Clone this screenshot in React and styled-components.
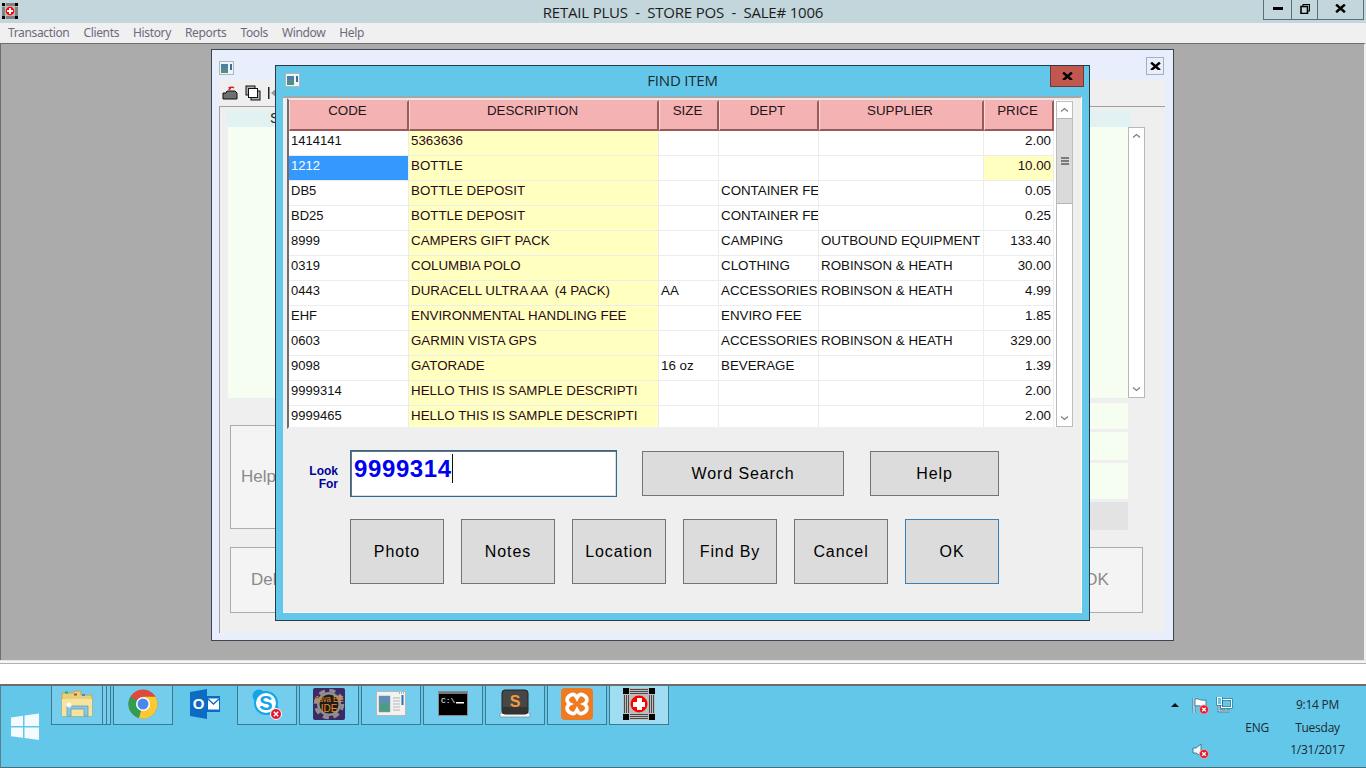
import React from "react";
import styled, { createGlobalStyle } from "styled-components";

const Global = createGlobalStyle`
  html, body { margin: 0; padding: 0; overflow: hidden; }
  body { font-family: "Liberation Sans", Arial, sans-serif; }
  * { box-sizing: border-box; }
`;

const Screen = styled.div`
  width: 1366px;
  height: 768px;
  display: flex;
  flex-direction: column;
  overflow: hidden;
  background: #f0f0f0;
`;

const TitleBar = styled.div`
  height: 23px;
  background: #c3d6dc;
  display: flex;
  align-items: flex-start;
  position: relative;
  padding-left: 2px;
  padding-top: 3px;
`;
const TitleText = styled.div`
  position: absolute;
  left: 0;
  right: 0;
  top: 2px;
  text-align: center;
  font: 15px/20px "Open Sans", sans-serif;
  letter-spacing: -0.2px;
  white-space: pre;
  color: #1c1c1c;
`;
const Controls = styled.div`
  position: absolute;
  top: 0;
  left: 1263px;
  display: flex;
  height: 20px;
  border: 1px solid #55707c;
  border-top: 0;
`;
const Control = styled.div`
  width: ${(p) => p.$w}px;
  display: flex;
  align-items: center;
  justify-content: center;
  padding-bottom: 2px;
  border-left: ${(p) => (p.$first ? "0" : "1px solid #55707c")};
`;

const MenuBar = styled.div`
  height: 20px;
  background: #f0f0f0;
  display: flex;
  gap: 14px;
  padding-left: 8px;
  font: 12px/20px "Noto Sans", sans-serif;
  letter-spacing: -0.35px;
  color: #6b6b7b;
`;

const Mdi = styled.div`
  height: 617px;
  position: relative;
  background: #ababab;
  border: 1px solid #6e6e6e;
  border-width: 1px 0 0 1px;
  border-right: 2px solid #f0f0f0;
`;

const BackWindow = styled.div`
  position: absolute;
  left: 210px;
  top: 5px;
  width: 963px;
  height: 592px;
  background: #e8eefc;
  border: 1px solid #3b4650;
  padding: 0 8px 7px 7px;
  display: flex;
  flex-direction: column;
  color: #8a8a8a;
`;
const BackHead = styled.div`
  height: 30px;
  display: flex;
  align-items: center;
  justify-content: space-between;
  padding-top: 6px;
  padding-right: 1px;
`;
const BackClose = styled.div`
  width: 18px;
  height: 18px;
  border: 1px solid #a3b0bd;
  display: flex;
  align-items: center;
  justify-content: center;
  margin-top: -4px;
`;
const BackTools = styled.div`
  height: 27px;
  background: #efefef;
  display: flex;
  align-items: center;
  gap: 7px;
  padding-left: 3px;
  border-bottom: 1px solid #a0a0a0;
  flex: none;
`;
const BackPanel = styled.div`
  flex: 1;
  background: #efefef;
  border-left: 1px solid #a0a0a0;
  padding: 3px 0 0 8px;
  display: flex;
  flex-direction: column;
`;
const BackBand = styled.div`
  width: 904px;
  height: 17px;
  margin-left: -1px;
  background: #e2f1f1;
  padding-left: 43px;
  font-size: 14px;
  line-height: 17px;
  color: #222;
  flex: none;
`;
const BackList = styled.div`
  height: 271px;
  display: flex;
  flex: none;
`;
const BackGreen = styled.div`
  width: 900px;
  background: #f6fef2;
`;
const BackScroll = styled.div`
  width: 17px;
  border: 1px solid #b8b8b8;
  background: #fff;
  display: flex;
  flex-direction: column;
  justify-content: space-between;
`;
const BackMiddle = styled.div`
  display: flex;
  justify-content: space-between;
  width: 900px;
  height: 132px;
  flex: none;
`;
const BackBox = styled.div`
  border: 1px solid #a9adad;
  background: #f4f4f4;
  font-size: 17px;
  display: flex;
  align-items: center;
`;
const HelpBox = styled(BackBox)`
  width: 270px;
  height: 104px;
  margin: 27px 0 0 2px;
  padding-left: 10px;
`;
const Totals = styled.div`
  width: 300px;
  display: flex;
  flex-direction: column;
  padding-top: 5px;
  gap: 3px;
`;
const TotalRow = styled.div`
  height: ${(p) => p.$h}px;
  background: ${(p) => p.$bg};
`;
const BackBottom = styled.div`
  display: flex;
  justify-content: space-between;
  width: 913px;
  margin: 17px 0 0 2px;
`;
const DelBox = styled(BackBox)`
  width: 120px;
  height: 66px;
  padding-left: 20px;
`;
const OkBox = styled(BackBox)`
  width: 93px;
  height: 66px;
  justify-content: center;
`;

const Dialog = styled.div`
  position: absolute;
  left: 274px;
  top: 21px;
  width: 815px;
  height: 556px;
  background: #63c7ea;
  border: 1px solid #2b3a44;
  padding: 0 7px 7px 7px;
  display: flex;
  flex-direction: column;
`;
const DialogHead = styled.div`
  height: 30px;
  flex: none;
  position: relative;
  display: flex;
  align-items: center;
  justify-content: center;
  font: 15px/28px "Open Sans", sans-serif;
  letter-spacing: -0.2px;
  color: #1b2a30;
  padding-bottom: 2px;
`;
const DialogIconSpot = styled.div`
  position: absolute;
  left: 2px;
  top: 7px;
  display: flex;
`;
const DialogClose = styled.div`
  position: absolute;
  right: -2px;
  top: 0;
  width: 34px;
  height: 21px;
  background: #c1584f;
  border: 1px solid #6f3a36;
  border-top: 0;
  display: flex;
  align-items: center;
  justify-content: center;
`;
const DialogBody = styled.div`
  flex: 1;
  background: #efefef;
  border-top: 2px solid #a6a6a6;
  border-bottom: 1px solid #fff;
  border-right: 1px solid #fff;
  display: flex;
  flex-direction: column;
`;
const GridFrame = styled.div`
  margin: 0 6px 0 4px;
  height: 331px;
  background: #fff;
  border: 2px solid #f0f0f0;
  border-left-color: #6e6e6e;
  border-top-color: #e8e8e8;
  display: flex;
  flex: none;
  position: relative;
`;
const Grid = styled.div`
  width: 765px;
  overflow: hidden;
`;
const HeadRow = styled.div`
  display: grid;
  grid-template-columns: 120px 250px 60px 100px 165px 70px;
  height: 31px;
  background: #fff;
`;
const HeadCell = styled.div`
  background: #f5b2b2;
  border: 2px solid #f5b2b2;
  border-right-color: #9a5a5a;
  border-bottom-color: #9a5a5a;
  border-left: 1px solid #fbd9d9;
  text-align: center;
  font-size: 13.33px;
  line-height: 17px;
  color: #22141a;
  padding-right: 2px;
`;
const Row = styled.div`
  display: grid;
  grid-template-columns: 120px 250px 60px 100px 165px 70px;
  height: 25px;
`;
const Cell = styled.div`
  overflow: hidden;
  white-space: pre;
  font-size: ${(p) => (p.$small ? "13px" : "13.33px")};
  line-height: 19px;
  padding: 0 2px 0 2px;
  border-right: 1px solid #ececec;
  border-bottom: 1px solid #ececec;
  background: ${(p) => (p.$sel ? "#3399ff" : p.$hi ? "#ffffc0" : "#fff")};
  color: ${(p) => (p.$sel ? "#fff" : p.$hi ? "#2a0a14" : "#111")};
  text-align: ${(p) => (p.$right ? "right" : "left")};
`;
const Scroll = styled.div`
  position: absolute;
  right: 0;
  top: 1px;
  bottom: 0;
  width: 17px;
  border: 1px solid #bcbcbc;
  background: #fff;
  display: flex;
  flex-direction: column;
`;
const ScrollBtn = styled.div`
  height: 16px;
  flex: none;
  display: flex;
  align-items: center;
  justify-content: center;
`;
const Thumb = styled.div`
  height: 86px;
  background: #dadada;
  border: 1px solid #b5b5b5;
  border-width: 1px 0;
  display: flex;
  align-items: center;
  justify-content: center;
  flex-direction: column;
  gap: 1px;
  flex: none;
`;
const Grip = styled.div`
  width: 8px;
  height: 2px;
  background: #7a7a7a;
`;
const ScrollFill = styled.div`
  flex: 1;
`;

const LookRow = styled.div`
  display: flex;
  align-items: flex-start;
  margin-top: 21px;
  height: 47px;
  flex: none;
`;
const LookLabel = styled.div`
  width: 55px;
  margin-right: 12px;
  margin-top: 15px;
  text-align: right;
  font-size: 12px;
  line-height: 13px;
  font-weight: 700;
  color: #00009c;
`;
const LookInput = styled.div`
  width: 267px;
  height: 47px;
  background: #fff;
  border: 1px solid #2f6a94;
  box-shadow: inset 1px 1px 0 #707070, inset -1px -1px 0 #dcdcdc;
  padding: 3px 0 0 3px;
  margin-right: 25px;
  display: flex;
  align-items: flex-start;
  font-size: 24px;
  line-height: 29px;
  font-weight: 700;
  letter-spacing: 0.62px;
  color: #0000f0;
`;
const Caret = styled.span`
  display: inline-block;
  width: 1px;
  height: 29px;
  background: #111;
`;
const Button = styled.div`
  width: ${(p) => p.$w}px;
  height: ${(p) => p.$h}px;
  background: #dcdcdc;
  border: 1px solid ${(p) => (p.$focus ? "#3a7fb5" : "#747474")};
  display: flex;
  align-items: center;
  justify-content: center;
  font: 16px "Liberation Sans", sans-serif;
  letter-spacing: 0.9px;
  color: #000;
  flex: none;
`;
const LookButton = styled(Button)`
  margin: 1px 26px 0 0;
`;
const ButtonRow = styled.div`
  display: flex;
  gap: 17px;
  margin: 22px 0 0 67px;
`;

const StatusBar = styled.div`
  height: 26px;
  background: #fff;
  border-top: 1px solid #e4e4e4;
  box-shadow: inset 0 2px 0 #f6f6f6, inset 0 3px 0 #b0b0b0;
  border-bottom: 2px solid #6c6c6c;
`;

const Taskbar = styled.div`
  flex: 1;
  background: #63c7ea;
  border-left: 1px solid #5b7f8c;
  border-bottom: 1px solid #4f6a75;
  display: flex;
  align-items: flex-start;
  position: relative;
`;
const StartSpot = styled.div`
  width: 50px;
  height: 81px;
  display: flex;
  align-items: flex-start;
  padding: 27px 0 0 10px;
  flex: none;
`;
const TaskList = styled.div`
  display: flex;
  gap: 2px;
`;
const TaskBtn = styled.div`
  width: 60px;
  height: 39px;
  display: flex;
  align-items: center;
  justify-content: center;
  border: ${(p) => (p.$plain ? "1px solid transparent" : "1px solid #3d7a8f")};
  border-top: 0;
  background: ${(p) => (p.$active ? "#a0dcf2" : p.$plain ? "transparent" : "#74cdec")};
  flex: none;
  padding-bottom: 2px;
`;
const StackedGroup = styled.div`
  display: flex;
`;
const StackedBtn = styled(TaskBtn)`
  width: 52px;
`;
const StackEdge = styled.div`
  width: 4px;
  height: 39px;
  background: #74cdec;
  border: 1px solid #3d7a8f;
  border-width: 0 1px 1px 0;
  flex: none;
`;
const Tray = styled.div`
  position: absolute;
  left: 1165px;
  top: 8px;
  width: 197px;
  display: grid;
  grid-template-columns: 26px 24px 20px 36px 91px;
  grid-auto-rows: 22.5px;
  font: 12px/22px "Open Sans", sans-serif;
  letter-spacing: -0.25px;
  color: #1a2a30;
  align-items: center;
`;
const Arrow = styled.div`
  width: 0;
  height: 0;
  margin-left: 5px;
  border: 4px solid transparent;
  border-top: 0;
  border-bottom: 4px solid #111;
`;
const TrayIcon = styled.div`
  display: flex;
  align-items: center;
`;
const TrayClock = styled.div`
  text-align: center;
  white-space: nowrap;
`;
const TrayLang = styled.div`
  text-align: right;
  padding-right: 3px;
`;
const Blank = styled.div``;

const CloseX = ({ size = 12, color = "#000" }) => (
  <svg width={size} height={size * 0.8} viewBox="0 0 10 8">
    <path d="M1 0.5 L9 7.5 M9 0.5 L1 7.5" stroke={color} strokeWidth="2.2" />
  </svg>
);

const Chevron = ({ down }) => (
  <svg width="9" height="6" viewBox="0 0 9 6">
    <path d={down ? "M1 1.5 L4.5 4.5 L8 1.5" : "M1 4.5 L4.5 1.5 L8 4.5"} fill="none" stroke="#7d7d7d" strokeWidth="1.2" />
  </svg>
);

const AppIcon = ({ size = 16 }) => (
  <svg width={size} height={size} viewBox="0 0 32 32" shapeRendering="crispEdges">
    <rect width="32" height="32" fill="#bdbdbd" />
    <path d="M7 1.5H25M7 3.5H25M7 5.5H25M7 26.5H25M7 28.5H25M7 30.5H25M1.5 7V25M3.5 7V25M5.5 7V25M26.5 7V25M28.5 7V25M30.5 7V25" fill="none" stroke="#4a4a4a" strokeWidth="1" />
    <path d="M0 0h6v6h-6zM26 0h6v6h-6zM0 26h6v6h-6zM26 26h6v6h-6z" fill="#000" />
    <circle cx="16" cy="16" r="8.5" fill="#f00" shapeRendering="auto" />
    <path d="M13.5 10h5v3.5H22v5h-3.5V22h-5v-3.5H10v-5h3.5z" fill="#fff" />
  </svg>
);

const WinThumb = ({ w = 15, h = 14 }) => (
  <svg width={w} height={h} viewBox="0 0 15 14">
    <rect x="0.5" y="0.5" width="14" height="13" fill="#f1f4f6" stroke="#a9b9c4" />
    <rect x="2" y="3" width="7" height="9" fill="#4f8f87" />
    <rect x="2" y="3" width="7" height="4" fill="#4f7fa6" />
    <rect x="11" y="3" width="2" height="6" fill="#3b6e99" />
  </svg>
);

const OpenIcon = () => (
  <svg width="16" height="16" viewBox="0 0 16 16">
    <path d="M1 8 H4 L5 6 H13 L15 8 V14 H1 Z" fill="#6f6f6f" stroke="#111" />
    <path d="M7 5 A3 3 0 0 1 12 3" fill="none" stroke="#e01010" strokeWidth="1.3" />
    <path d="M6 2.5 L9 1.5 L8.5 5 Z" fill="#e01010" />
  </svg>
);

const CopyIcon = () => (
  <svg width="16" height="16" viewBox="0 0 16 16">
    <rect x="1" y="1" width="9" height="9" fill="#b0b0b0" stroke="#111" />
    <rect x="6" y="6" width="9" height="9" fill="#b0b0b0" stroke="#111" />
    <rect x="3.5" y="3.5" width="9" height="9" fill="#fff" stroke="#111" />
  </svg>
);

const FirstIcon = () => (
  <svg width="10" height="14" viewBox="0 0 10 14">
    <rect x="0" y="1" width="1.5" height="12" fill="#222" />
    <path d="M10 1 L3 7 L10 13 Z" fill="#999" />
  </svg>
);

const WindowsLogo = () => (
  <svg width="28" height="28" viewBox="0 0 28 28">
    <path d="M0 4.5 L12 2.8 V13 H0 Z M13.5 2.6 L28 0.5 V13 H13.5 Z M0 14.5 H12 V24.8 L0 23.2 Z M13.5 14.5 H28 V27 L13.5 25 Z" fill="#fff" fillOpacity="0.93" />
  </svg>
);

const FolderIcon = () => (
  <svg width="32" height="30" viewBox="0 0 32 30">
    <path d="M1 4 H12 L14 2 H20 V6 H31 V27 H1 Z" fill="#e9cf7d" stroke="#c0a658" />
    <rect x="4" y="2.5" width="3" height="2" fill="#2fae4a" />
    <rect x="13" y="4.5" width="3" height="2" fill="#c8442c" />
    <rect x="21" y="5" width="3" height="2" fill="#3c8fe0" />
    <path d="M1 10 H31 V27 H1 Z" fill="#f5e39e" />
    <path d="M6 27 V17 H27 V27 H23 V20 H10 V27 Z" fill="#8cc6e2" stroke="#5f9fc0" strokeWidth="0.8" />
    <circle cx="8" cy="16" r="2.5" fill="#fff" fillOpacity="0.85" />
  </svg>
);

const ChromeIcon = () => (
  <svg width="30" height="30" viewBox="0 0 30 30">
    <circle cx="15" cy="15" r="14.5" fill="#db4a3d" />
    <path d="M15 15 L2.4 7.8 A14.5 14.5 0 0 0 11 29 Z" fill="#2f9e50" />
    <path d="M15 15 L27.6 7.8 H15 Z M15 15 L27.6 7.8 A14.5 14.5 0 0 1 11 29 Z" fill="#fbc934" />
    <circle cx="15" cy="15" r="7" fill="#fff" />
    <circle cx="15" cy="15" r="5.5" fill="#4a87ec" />
  </svg>
);

const OutlookIcon = () => (
  <svg width="32" height="32" viewBox="0 0 32 32">
    <rect x="17" y="8" width="14" height="16" fill="#0c6cc4" />
    <path d="M19 10.5 H30 V21.5 H19 Z" fill="#fff" />
    <path d="M19 11 L24.5 16 L30 11" fill="none" stroke="#0c6cc4" strokeWidth="1.3" />
    <path d="M1 4 L18 1 V31 L1 28 Z" fill="#0c6cc4" />
    <text x="9.5" y="21" textAnchor="middle" fontFamily="Liberation Sans" fontWeight="700" fontSize="15" fill="#fff">O</text>
  </svg>
);

const ErrorDot = ({ cx, cy, r = 5, rim = "#fff" }) => (
  <g>
    <circle cx={cx} cy={cy} r={r} fill="#e0182d" stroke={rim} strokeWidth="1" />
    <path d={`M${cx - r * 0.4} ${cy - r * 0.4} L${cx + r * 0.4} ${cy + r * 0.4} M${cx + r * 0.4} ${cy - r * 0.4} L${cx - r * 0.4} ${cy + r * 0.4}`} stroke="#fff" strokeWidth="1.4" />
  </g>
);

const SkypeIcon = () => (
  <svg width="32" height="32" viewBox="0 0 32 32">
    <circle cx="8" cy="8" r="6.5" fill="#12a5e8" />
    <circle cx="21" cy="21" r="6.5" fill="#12a5e8" />
    <circle cx="15" cy="15" r="12" fill="#12a5e8" />
    <circle cx="15" cy="15" r="10" fill="#fff" />
    <text x="15" y="22" textAnchor="middle" fontFamily="Liberation Sans" fontWeight="700" fontSize="20" fill="#12a5e8">S</text>
    <ErrorDot cx={25} cy={26} r={5.5} />
  </svg>
);

const JavaIcon = () => (
  <svg width="32" height="32" viewBox="0 0 32 32">
    <rect width="32" height="32" rx="2" fill="#3b2a63" />
    <circle cx="16" cy="16" r="13.5" fill="none" stroke="#8f8f8f" strokeWidth="3.5" strokeDasharray="6 4.6" />
    <circle cx="16" cy="16" r="12" fill="#8f8f8f" />
    <circle cx="16" cy="16" r="9.5" fill="#1c1c1c" />
    <text x="16" y="14" textAnchor="middle" fontFamily="Liberation Sans" fontSize="9" textLength="29" lengthAdjust="spacingAndGlyphs" fill="#f08a1c">Java EE</text>
    <text x="16" y="24" textAnchor="middle" fontFamily="Liberation Sans" fontSize="10" fill="#f08a1c">IDE</text>
  </svg>
);

const WindowIcon = () => (
  <svg width="30" height="26" viewBox="0 0 30 26">
    <rect x="0.5" y="0.5" width="29" height="24" fill="#f2f2f2" stroke="#b8b8b8" />
    <rect x="3" y="5" width="11" height="16" fill="#4f9a85" stroke="#8aa0aa" strokeWidth="0.5" />
    <rect x="3" y="5" width="11" height="7" fill="#5f8fb5" />
    <path d="M17 7h7M17 10h7M17 13h7M17 16h7M17 19h7" stroke="#b5b5b5" />
    <rect x="25.5" y="4" width="2" height="10" fill="#2e74a8" />
    <path d="M23 2h1M25 2h1M27 2h1" stroke="#777" />
  </svg>
);

const CmdIcon = () => (
  <svg width="30" height="26" viewBox="0 0 30 26">
    <rect x="0.5" y="0.5" width="29" height="24" fill="#000" stroke="#8a8a8a" />
    <rect x="1" y="1" width="28" height="2" fill="#777" />
    <text x="3" y="12" fontFamily="Liberation Mono" fontSize="8" fill="#fff">C:\</text>
    <rect x="18" y="11" width="8" height="1.5" fill="#fff" />
  </svg>
);

const SublimeIcon = () => (
  <svg width="32" height="30" viewBox="0 0 32 30">
    <rect x="1" y="24" width="30" height="4" rx="1" fill="#f4f4f4" stroke="#777" strokeWidth="0.6" />
    <rect x="3" y="1" width="26" height="24" rx="3" fill="#474747" stroke="#222" />
    <rect x="4" y="18" width="24" height="6" fill="#333" />
    <text x="16" y="18" textAnchor="middle" fontFamily="Liberation Sans" fontWeight="700" fontSize="16" fill="#f29a3e">S</text>
  </svg>
);

const XamppIcon = () => (
  <svg width="32" height="32" viewBox="0 0 32 32">
    <rect width="32" height="32" rx="4" fill="#ee7a22" />
    <path d="M10 7 C13 5 15 8 16 10 C17 8 19 5 22 7 C27 9 27 14 23 16 C27 18 27 23 22 25 C19 27 17 24 16 22 C15 24 13 27 10 25 C5 23 5 18 9 16 C5 14 5 9 10 7 Z" fill="#ee7a22" stroke="#fff" strokeWidth="3.6" />
  </svg>
);

const FlagIcon = () => (
  <svg width="17" height="17" viewBox="0 0 17 17">
    <path d="M2 1 V16" stroke="#1f5a70" strokeWidth="2.6" />
    <path d="M2 1 V16" stroke="#fff" strokeWidth="1.3" />
    <path d="M3 2 C6 1 8 4 14 3 V9 C9 10 7 8 3 9 Z" fill="#fff" stroke="#2a6a80" strokeWidth="0.8" />
    <ErrorDot cx={12} cy={12.5} r={4.5} rim="#e8a0a0" />
  </svg>
);

const NetIcon = () => (
  <svg width="17" height="16" viewBox="0 0 17 16">
    <path d="M10 11 V13 M6 14 H14 M3 8 V14 H6" stroke="#1f5a70" strokeWidth="2.4" fill="none" />
    <path d="M10 11 V13 M6 14 H14 M3 8 V14 H6" stroke="#fff" strokeWidth="1.1" fill="none" />
    <rect x="5.5" y="2.5" width="10" height="8" fill="#63c7ea" stroke="#1f5a70" strokeWidth="2" />
    <rect x="5.5" y="2.5" width="10" height="8" fill="none" stroke="#fff" />
    <rect x="1.5" y="0.5" width="4" height="7" fill="#63c7ea" stroke="#1f5a70" strokeWidth="2" />
    <rect x="1.5" y="0.5" width="4" height="7" fill="#63c7ea" stroke="#fff" />
  </svg>
);

const SpeakerIcon = () => (
  <svg width="17" height="17" viewBox="0 0 17 17">
    <path d="M1 6 H4 L9 2 V14 L4 11 H1 Z" fill="#f4f8fa" stroke="#2a6a80" strokeWidth="0.8" />
    <ErrorDot cx={12} cy={12} r={4.5} rim="#e8a0a0" />
  </svg>
);

const items = [
  ["1414141", "5363636", "", "", "", "2.00"],
  ["1212", "BOTTLE", "", "", "", "10.00"],
  ["DB5", "BOTTLE DEPOSIT", "", "CONTAINER FEE", "", "0.05"],
  ["BD25", "BOTTLE DEPOSIT", "", "CONTAINER FEE", "", "0.25"],
  ["8999", "CAMPERS GIFT PACK", "", "CAMPING", "OUTBOUND EQUIPMENT", "133.40"],
  ["0319", "COLUMBIA POLO", "", "CLOTHING", "ROBINSON & HEATH", "30.00"],
  ["0443", "DURACELL ULTRA AA  (4 PACK)", "AA", "ACCESSORIES", "ROBINSON & HEATH", "4.99"],
  ["EHF", "ENVIRONMENTAL HANDLING FEE", "", "ENVIRO FEE", "", "1.85"],
  ["0603", "GARMIN VISTA GPS", "", "ACCESSORIES", "ROBINSON & HEATH", "329.00"],
  ["9098", "GATORADE", "16 oz", "BEVERAGE", "", "1.39"],
  ["9999314", "HELLO THIS IS SAMPLE DESCRIPTI", "", "", "", "2.00"],
  ["9999465", "HELLO THIS IS SAMPLE DESCRIPTI", "", "", "", "2.00"],
];

const columns = ["CODE", "DESCRIPTION", "SIZE", "DEPT", "SUPPLIER", "PRICE"];
const menus = ["Transaction", "Clients", "History", "Reports", "Tools", "Window", "Help"];

export default function App() {
  return (
    <Screen>
      <Global />
      <TitleBar>
        <AppIcon size={16} />
        <TitleText>{"RETAIL PLUS  -  STORE POS  -  SALE# 1006"}</TitleText>
        <Controls>
          <Control $w={27} $first>
            <svg width="10" height="3"><rect width="10" height="3" fill="#000" /></svg>
          </Control>
          <Control $w={26}>
            <svg width="10" height="10" viewBox="0 0 10 10">
              <rect x="3" y="0.5" width="6.5" height="6.5" fill="none" stroke="#000" />
              <rect x="1" y="2.5" width="6.5" height="7" fill="#c3d6dc" stroke="#000" strokeWidth="1.6" />
            </svg>
          </Control>
          <Control $w={46}><CloseX size={11} /></Control>
        </Controls>
      </TitleBar>
      <MenuBar>
        {menus.map((m) => <span key={m}>{m}</span>)}
      </MenuBar>
      <Mdi>
        <BackWindow>
          <BackHead>
            <WinThumb />
            <BackClose><CloseX size={11} /></BackClose>
          </BackHead>
          <BackTools>
            <OpenIcon />
            <CopyIcon />
            <FirstIcon />
          </BackTools>
          <BackPanel>
            <BackBand>S</BackBand>
            <BackList>
              <BackGreen />
              <BackScroll>
                <ScrollBtn><Chevron /></ScrollBtn>
                <ScrollBtn><Chevron down /></ScrollBtn>
              </BackScroll>
            </BackList>
            <BackMiddle>
              <HelpBox>Help</HelpBox>
              <Totals>
                <TotalRow $h={26} $bg="#f6fef2" />
                <TotalRow $h={28} $bg="#f6fef2" />
                <TotalRow $h={37} $bg="#f6fef2" />
                <TotalRow $h={28} $bg="#e3e3e3" />
              </Totals>
            </BackMiddle>
            <BackBottom>
              <DelBox>Del</DelBox>
              <OkBox>OK</OkBox>
            </BackBottom>
          </BackPanel>
        </BackWindow>

        <Dialog>
          <DialogHead>
            <DialogIconSpot><WinThumb /></DialogIconSpot>
            FIND ITEM
            <DialogClose><CloseX size={11} /></DialogClose>
          </DialogHead>
          <DialogBody>
            <GridFrame>
              <Grid>
                <HeadRow>
                  {columns.map((c) => <HeadCell key={c}>{c}</HeadCell>)}
                </HeadRow>
                {items.map((row, i) => (
                  <Row key={row[0]}>
                    <Cell $small $sel={i === 1}>{row[0]}</Cell>
                    <Cell $hi>{row[1]}</Cell>
                    <Cell>{row[2]}</Cell>
                    <Cell>{row[3]}</Cell>
                    <Cell>{row[4]}</Cell>
                    <Cell $right $hi={i === 1}>{row[5]}</Cell>
                  </Row>
                ))}
              </Grid>
              <Scroll>
                <ScrollBtn><Chevron /></ScrollBtn>
                <Thumb><Grip /><Grip /><Grip /></Thumb>
                <ScrollFill />
                <ScrollBtn><Chevron down /></ScrollBtn>
              </Scroll>
            </GridFrame>
            <LookRow>
              <LookLabel>Look<br />For</LookLabel>
              <LookInput>9999314<Caret /></LookInput>
              <LookButton $w={202} $h={45}>Word Search</LookButton>
              <LookButton $w={129} $h={45}>Help</LookButton>
            </LookRow>
            <ButtonRow>
              <Button $w={94} $h={65}>Photo</Button>
              <Button $w={94} $h={65}>Notes</Button>
              <Button $w={94} $h={65}>Location</Button>
              <Button $w={94} $h={65}>Find By</Button>
              <Button $w={94} $h={65}>Cancel</Button>
              <Button $w={94} $h={65} $focus>OK</Button>
            </ButtonRow>
          </DialogBody>
        </Dialog>
      </Mdi>
      <StatusBar />
      <Taskbar>
        <StartSpot><WindowsLogo /></StartSpot>
        <TaskList>
          <StackedGroup>
            <StackedBtn><FolderIcon /></StackedBtn>
            <StackEdge />
            <StackEdge />
          </StackedGroup>
          <TaskBtn><ChromeIcon /></TaskBtn>
          <TaskBtn $plain><OutlookIcon /></TaskBtn>
          <TaskBtn><SkypeIcon /></TaskBtn>
          <TaskBtn><JavaIcon /></TaskBtn>
          <TaskBtn><WindowIcon /></TaskBtn>
          <TaskBtn><CmdIcon /></TaskBtn>
          <TaskBtn><SublimeIcon /></TaskBtn>
          <TaskBtn><XamppIcon /></TaskBtn>
          <TaskBtn $active><AppIcon size={32} /></TaskBtn>
        </TaskList>
        <Tray>
          <Arrow />
          <TrayIcon><FlagIcon /></TrayIcon>
          <TrayIcon><NetIcon /></TrayIcon>
          <Blank />
          <TrayClock>9:14 PM</TrayClock>
          <Blank /><Blank /><Blank />
          <TrayLang>ENG</TrayLang>
          <TrayClock>Tuesday</TrayClock>
          <Blank />
          <TrayIcon><SpeakerIcon /></TrayIcon>
          <Blank /><Blank />
          <TrayClock>1/31/2017</TrayClock>
        </Tray>
      </Taskbar>
    </Screen>
  );
}
